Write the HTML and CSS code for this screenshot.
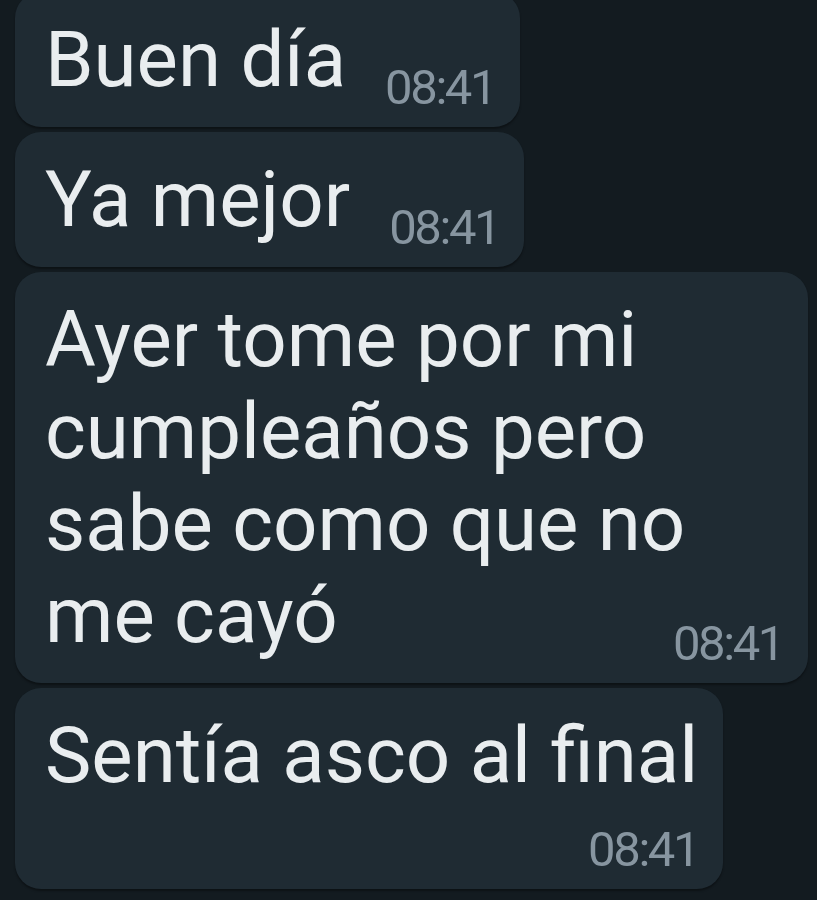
FILE: index.html
```html
<!DOCTYPE html>
<html lang="es">
<head>
<meta charset="utf-8">
<title>Chat</title>
<link rel="stylesheet" href="styles.css">
</head>
<body>
<main class="chat">
  <div class="bubble bubble--first">
    <span class="text">Buen día</span>
    <span class="time">08:41</span>
  </div>
  <div class="bubble">
    <span class="text">Ya mejor</span>
    <span class="time">08:41</span>
  </div>
  <div class="bubble bubble--wide">
    <span class="text">Ayer tome por mi<br>cumpleaños pero<br>sabe como que no<br>me cayó</span>
    <span class="time">08:41</span>
  </div>
  <div class="bubble bubble--stack">
    <span class="text">Sentía asco al final</span>
    <span class="time">08:41</span>
  </div>
</main>
</body>
</html>
```

FILE: styles.css
```css
html, body {
  margin: 0;
  padding: 0;
  background: #131b20;
  height: 100%;
  overflow: hidden;
}

.chat {
  display: flex;
  flex-direction: column;
  align-items: flex-start;
  gap: 5px;
  padding: 0 9px 0 15px;
  margin-top: -8px;
  font-family: Roboto, "Noto Sans", sans-serif;
}

.bubble {
  position: relative;
  display: flex;
  align-items: flex-end;
  gap: 39px;
  box-sizing: border-box;
  max-width: 100%;
  padding: 22px 25px 21px 30px;
  background: #1f2b33;
  border-radius: 26px;
  box-shadow: 0 2px 2px rgba(0, 0, 0, 0.35);
}

.text {
  font-size: 78px;
  line-height: 92px;
  color: #e9edef;
  white-space: nowrap;
  min-width: 0;
}

.time {
  flex: none;
  font-size: 49px;
  line-height: 48px;
  letter-spacing: -2.4px;
  color: #8795a0;
  margin-bottom: -6px;
  white-space: nowrap;
}

.bubble--wide {
  width: 100%;
}

.bubble--wide .text {
  flex: 1 1 auto;
}

.bubble--stack {
  flex-direction: column;
  align-items: stretch;
  gap: 0;
}

.bubble--stack .time {
  align-self: flex-end;
  margin-top: 24px;
}
```
